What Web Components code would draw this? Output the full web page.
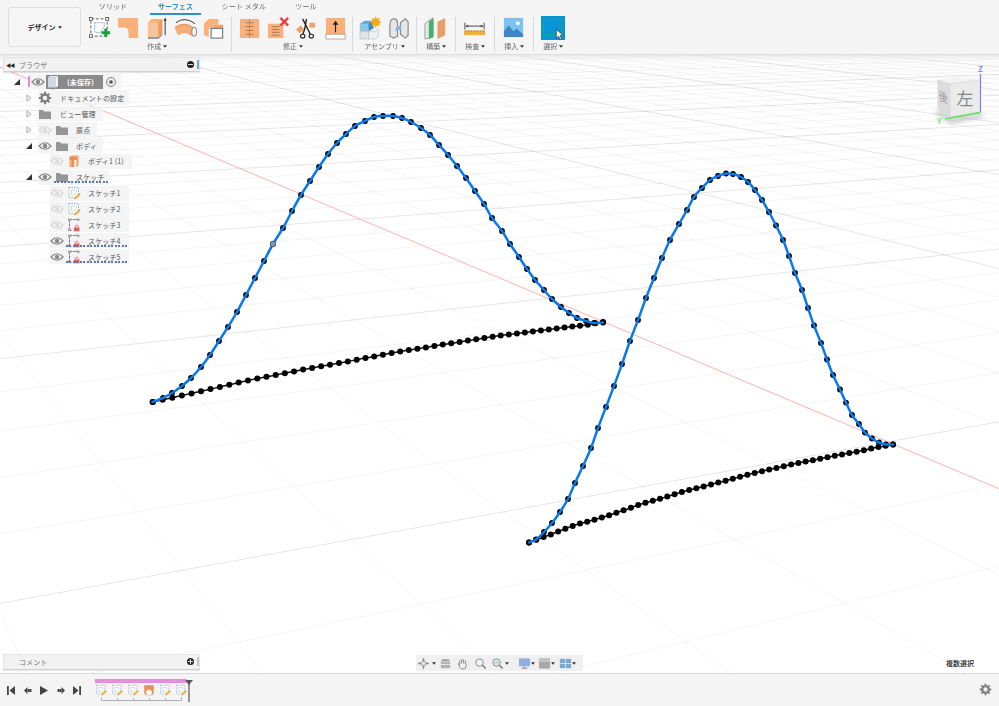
<!DOCTYPE html>
<html lang="ja"><head><meta charset="utf-8"><title>Fusion</title>
<style>
html,body{margin:0;padding:0;background:#fff;overflow:hidden}
body{font-family:"Noto Sans CJK JP","Noto Sans",sans-serif;font-size:7px;color:#555}
</style></head><body>
<fu-app>
  <fu-ribbon slot="ribbon">
    <fu-group label="作成" pad="86 2.5"><fu-icon name="sketch"></fu-icon><fu-icon name="lshape"></fu-icon><fu-icon name="extrude"></fu-icon><fu-icon name="sweep"></fu-icon><fu-icon name="loft"></fu-icon></fu-group>
    <fu-group label="修正" pad="4 2"><fu-icon name="press"></fu-icon><fu-icon name="del"></fu-icon><fu-icon name="scissors"></fu-icon><fu-icon name="up"></fu-icon></fu-group>
    <fu-group label="アセンブリ" pad="3 3"><fu-icon name="assembly"></fu-icon><fu-icon name="joint"></fu-icon></fu-group>
    <fu-group label="構築" pad="5 4.5"><fu-icon name="plane"></fu-icon></fu-group>
    <fu-group label="検査" pad="5 4.5"><fu-icon name="ruler"></fu-icon></fu-group>
    <fu-group label="挿入" pad="5 4.5"><fu-icon name="image"></fu-icon></fu-group>
    <fu-group label="選択" pad="5 4.5" nosep><fu-icon name="select"></fu-icon></fu-group>
  </fu-ribbon>
  <fu-viewport slot="view">
    <fu-browser>
      <fu-row lead="25" tri="open" kind="root">(未保存)</fu-row>
      <fu-row lead="35" tri="closed" icon="gear" end="5">ドキュメントの設定</fu-row>
      <fu-row lead="35" tri="closed" icon="folder" end="7">ビュー管理</fu-row>
      <fu-row lead="35" tri="closed" eye="off" icon="folder" end="7">原点</fu-row>
      <fu-row lead="35" tri="open" eye="on" icon="folder" end="6">ボディ</fu-row>
      <fu-row lead="47" eye="off" icon="body" end="8">ボディ1 (1)</fu-row>
      <fu-row lead="35" tri="open" eye="on" icon="folder" end="4" wave="16">スケッチ</fu-row>
      <fu-row lead="47" eye="off" icon="tsketch" end="8">スケッチ1</fu-row>
      <fu-row lead="47" eye="off" icon="tsketch" end="8">スケッチ2</fu-row>
      <fu-row lead="47" eye="off" icon="lock" end="8">スケッチ3</fu-row>
      <fu-row lead="47" eye="on" icon="lock" end="8" wave="16">スケッチ4</fu-row>
      <fu-row lead="47" eye="on" icon="lock" end="8" wave="16">スケッチ5</fu-row>
    </fu-browser>
    <fu-cube></fu-cube>
    <fu-comment></fu-comment>
    <fu-navbar></fu-navbar>
    <fu-status>複数選択</fu-status>
  </fu-viewport>
  <fu-timeline slot="timeline"></fu-timeline>
</fu-app>
<script>
const ICONS={
sketch:`<path d="M3 3h17v18H3z" fill="#fff" stroke="#555" stroke-width="1" stroke-dasharray="3 2"/><rect x="1.5" y="1.5" width="3" height="3" fill="#fff" stroke="#444" stroke-width=".8"/><rect x="18.5" y="1.5" width="3" height="3" fill="#fff" stroke="#444" stroke-width=".8"/><rect x="1.5" y="19.5" width="3" height="3" fill="#fff" stroke="#444" stroke-width=".8"/><path d="M7 7h10v4l-4 6H7z" fill="none" stroke="#7a93ad" stroke-width=".9" stroke-dasharray="2 1"/><path d="M16 15h3v-3h3v3h3v3h-3v3h-3v-3h-3z" transform="translate(-2 1)" fill="#14a03c"/>`,
lshape:`<path d="M1 2h21v21H12v-6q0-5-5-5H1z" fill="#f9b07a"/>`,
extrude:`<path d="M3 7l4-4h11v15l-4 4H3z" fill="#f9b07a"/><path d="M3 7h11v15H3z" fill="#f7c39a"/><path d="M14 7l4-4v15l-4 4z" fill="#ee9a5e"/><path d="M3 22h11l4-4v2l-4 4H3z" fill="#9a9a9a"/><path d="M21 20V3" stroke="#333" stroke-width="1"/><path d="M19.5 5L21 1.5 22.500 5z" fill="#333"/>`,
sweep:`<path d="M1 12q10-7 20 1l-3 8q-7-6-13-1-3-2-4-8z" fill="#f6ac76"/><path d="M1 12q10-7 20 1" fill="none" stroke="#e59358" stroke-width="1.200"/><ellipse cx="21" cy="16.500" rx="2.500" ry="4.500" fill="#fff" stroke="#888" stroke-width="1.100"/><path d="M2 7q9-7 20 1" fill="none" stroke="#333" stroke-width="1"/>`,
loft:`<path d="M2 8l5-5h10v6h-5v4H7v9l-5-2z" fill="#f9b07a"/><path d="M12 9h10v4l-4 3h-6z" fill="#f5a163"/><rect x="9.500" y="13" width="12" height="10" fill="#fff" stroke="#777" stroke-width="1.200"/>`,
press:`<rect x="2" y="3" width="20" height="20" fill="#f9b07a"/><path d="M12 3v20" stroke="#a86a3c" stroke-width=".5"/><path d="M8 7h8M8 11h8M8 15h8M8 19h8" stroke="#8d6b50" stroke-width=".8"/>`,
del:`<rect x="1" y="8" width="16" height="15" fill="#f9b07a"/><path d="M5 11h8M5 14h8M5 17h8M5 20h8" stroke="#8d6b50" stroke-width=".8"/><path d="M14 2l8 8M22 2l-8 8" stroke="#ec3c40" stroke-width="2.400"/>`,
scissors:`<rect x="15" y="7" width="6" height="5" fill="#f0a068"/><path d="M1 14l5-4 4 4-5 4z" fill="#f0a068"/><path d="M8 3l8 16M12 3L10 14l-2 5" stroke="#222" stroke-width="1.400" fill="none"/><ellipse cx="17" cy="21" rx="2.300" ry="2" fill="none" stroke="#222" stroke-width="1.200"/><ellipse cx="8" cy="21" rx="2.300" ry="2" fill="none" stroke="#222" stroke-width="1.200"/>`,
up:`<rect x="2" y="2" width="20" height="17" fill="#f9b07a"/><rect x="2" y="19" width="20" height="5" fill="#fff" stroke="#999" stroke-width=".8"/><path d="M12 17V8" stroke="#222" stroke-width="1.200"/><path d="M9 9l3-4 3 4z" fill="#222"/>`,
assembly:`<path d="M2 8l5-3h9v8H2z" fill="#5aa7dc"/><path d="M2 8h9v8H2z" fill="#8ec5ea"/><path d="M11 8l5-3v8l-5 3z" fill="#3f8cc4"/><path d="M2 16h9v8H2z" fill="#dfe3e6" stroke="#aaa" stroke-width=".5"/><path d="M11 16h7l3-3v8l-3 3h-7z" fill="#eceeef" stroke="#aaa" stroke-width=".5"/><path d="M17 0l1.300 3 3-1-1 3 3 1.300-3 1.400 1 3-3-1L17 13l-1.300-3.300-3 1 1-3L10.500 6.300l3.200-1.300-1-3 3 1z" transform="translate(1.500 0)" fill="#f6a81c"/>`,
joint:`<path d="M3 10q0-7 4-7 4 0 4 5v13l-4 2-4-2z" fill="#e4e6e8" stroke="#888" stroke-width="1.200"/><path d="M14 7l5-4 3 3v14l-3 3-5-4z" fill="#e4e6e8" stroke="#888" stroke-width="1.200"/><path d="M9 12l6-3v5l-6 2z" fill="#8fb6da"/>`,
plane:`<path d="M1 8l8-6v20l-8 2z" fill="#e8e8e8" stroke="#888" stroke-width=".8"/><path d="M5 6l5-4v20l-5 2z" fill="#47b06a"/><path d="M14 6l8-4v18l-8 4z" fill="#ea9d68"/>`,
ruler:`<path d="M2 7v7M22 7v7M3 10.500h18" stroke="#444" stroke-width="1" fill="none"/><path d="M3 10.500l2.500-1.500v3zM21 10.500l-2.500-1.500v3z" fill="#444"/><rect x="1" y="15" width="22" height="5" fill="#f3b03c"/><path d="M3 15v2M6 15v2M9 15v2M12 15v2M15 15v2M18 15v2M21 15v2" stroke="#8a6a1c" stroke-width=".6"/>`,
image:`<rect x="2" y="2" width="20" height="20" fill="#7cc3ef"/><circle cx="16.500" cy="7.500" r="2" fill="#fff"/><path d="M2 22v-6l5-6 5 6 3-3 7 6v3z" fill="#3e86c4"/>`,
select:`<rect x="0" y="0" width="25" height="25" fill="#0696d7"/><rect x="2.500" y="3.500" width="19" height="16" fill="none" stroke="#37b24d" stroke-width="1" stroke-dasharray="2 1.500"/><path d="M16 14v9l2.300-2 1.700 3.500 1.500-.7-1.700-3.300 3-.5z" fill="#fff" stroke="#222" stroke-width=".6"/>`
};
const SMALL={
eyeon:`<path d="M1 7q6-6.500 12 0q-6 6.500-12 0z" fill="none" stroke="#888" stroke-width="1.200"/><circle cx="7" cy="7" r="2.200" fill="#888"/>`,
eyeoff:`<path d="M1 7q6-6.500 12 0q-6 6.500-12 0z" fill="none" stroke="#d8d8d8" stroke-width="1.200"/><circle cx="7" cy="7" r="2" fill="#dcdcdc"/><path d="M2.500 2.500l9.500 9.500" stroke="#d8d8d8" stroke-width="1"/>`,
folder:`<path d="M1 3h4l1 1.500h7V12H1z" fill="#969696"/>`,
gear:`<circle cx="7" cy="7" r="3.500" fill="none" stroke="#808080" stroke-width="2.400"/><path d="M7 .8v2.500M7 10.700v2.500M.8 7h2.500M10.700 7h2.500M2.600 2.600l1.800 1.800M9.600 9.600l1.800 1.800M11.400 2.600L9.600 4.400M4.400 9.600l-1.800 1.800" stroke="#808080" stroke-width="2"/>`,
body:`<path d="M2.500 3l2-1.500h7v10l-2 1.500h-7z" fill="#f3a474"/><path d="M2.500 3h7v3h-1.500v7H5V6H2.500z" fill="#ee8d55"/><path d="M7 6h2.500v7H7z" fill="#fbe2cf"/>`,
tsketch:`<rect x="2" y="1.500" width="9.500" height="10" fill="#fff" stroke="#7aa3cf" stroke-width=".8" stroke-dasharray="1.500 1"/><path d="M4.500 4h5v2l-2 3h-3z" fill="none" stroke="#aebfd3" stroke-width=".6"/><path d="M7.500 11.500l3.500-3.500 2-.5-.5 2-3.500 3.500-1.800.4z" fill="#f4b13a"/><path d="M12 8l1.500-.5L13 9z" fill="#e8483f"/>`,
lock:`<path d="M2.500 1.500v9M2.500 1.500h9M2.500 12.500h2" stroke="#555" stroke-width=".8" fill="none" stroke-dasharray="3 1"/><rect x="1.700" y="1" width="1.600" height="1.600" fill="#fff" stroke="#555" stroke-width=".5"/><rect x="10.500" y="1" width="1.600" height="1.600" fill="#fff" stroke="#555" stroke-width=".5"/><rect x="1.700" y="10.800" width="1.600" height="1.600" fill="#fff" stroke="#555" stroke-width=".5"/><rect x="7" y="9.500" width="5.500" height="3.800" fill="#e2605e"/><path d="M8.300 9.500V8.300a1.500 1.500 0 012.900 0v1.200" fill="none" stroke="#e2605e" stroke-width=".9"/>`,
doc:`<path d="M2 2.500h8v10H2z" fill="#cfdbe4"/><path d="M10 2.500l2-1.500v10l-2 1.500z" fill="#f2f5f7"/><path d="M2 2.500l2-1.500h8l-2 1.500z" fill="#e8eef2"/>`
};
function def(name,css,html,init){customElements.define(name,class extends HTMLElement{
  constructor(){super();const r=this.attachShadow({mode:'open'});r.innerHTML=`<style>${css}</style>`+(typeof html==='function'?'':html);}
  connectedCallback(){if(typeof html==='function')this.shadowRoot.innerHTML+=html(this);if(init)init(this,this.shadowRoot);}
});}
const ff='"Noto Sans CJK JP","Noto Sans",sans-serif';
const caret=`<svg width="4" height="3" viewBox="0 0 5 3" style="margin-left:2px;flex:none"><path d="M0 0h5L2.500 3z" fill="#333"/></svg>`;

def('fu-app',`:host{display:flex;flex-direction:column;width:999px;height:706px;overflow:hidden;font-family:${ff};filter:blur(.3px)}`,
`<slot name="ribbon"></slot><slot name="view"></slot><slot name="timeline"></slot>`);

def('fu-ribbon',`:host{display:flex;height:54px;background:#f5f5f5;flex:none;position:relative;z-index:2;box-shadow:0 1px 1px rgba(0,0,0,.05)}
.design{flex:none;width:71px;height:38px;margin:7px 0 0 8px;border:1px solid #dedede;border-radius:3px;background:#f6f6f6;display:flex;align-items:center;justify-content:center;font-size:7px;font-weight:700;color:#222}
.r{display:flex;flex-direction:column;position:absolute;left:0;top:0;right:0;bottom:0}
.tabs{display:flex;height:15px;margin-left:88px;flex:none}
.tab{width:50px;height:13px;line-height:12px;text-align:center;color:#666;font-size:7px;letter-spacing:.1px}
.tab.a{width:51px;margin:0 12px;color:#2c8ed6;font-weight:700;border-bottom:2px solid #2c8ed6}
.tab.w{width:62px;margin-right:6px}
.gs{display:flex;flex:1}`,
`<div class="r"><div class="tabs"><div class="tab">ソリッド</div><div class="tab a">サーフェス</div><div class="tab w">シート メタル</div><div class="tab">ツール</div></div><div class="gs"><slot></slot></div></div><div class="design">デザイン${caret}</div>`);

def('fu-group',`:host{display:flex;flex-direction:column;align-items:stretch;height:39px;position:relative;box-sizing:content-box}
.i{display:flex;height:25px}
.l{display:flex;align-items:center;justify-content:center;height:12px;margin-top:0;font-size:7px;color:#666}
.s{position:absolute;right:0;top:2px;bottom:3px;width:1px;background:#d8d8d8}`,
h=>{const[a,b]=h.getAttribute('pad').split(' ');return `<div style="display:flex;flex-direction:column;padding:0 ${+b+(h.hasAttribute('nosep')?0:1)}px 0 ${a}px"><div class="i"><slot></slot></div><div class="l">${h.getAttribute('label')}${caret}</div></div>${h.hasAttribute('nosep')?'':'<div class="s"></div>'}`});

def('fu-icon',`:host{display:flex;width:28.5px;height:25px;align-items:center;justify-content:center;flex:none}svg{display:block}`,
h=>`<svg width="24" height="24" viewBox="0 0 25 25">${ICONS[h.getAttribute('name')]}</svg>`);

def('fu-viewport',`:host{display:block;flex:1;position:relative;background:#fff;overflow:hidden}
svg{position:absolute;left:0;top:0}`,
`<svg id="c" width="999" height="620" viewBox="0 54 999 620"></svg><slot></slot>`,
(h,r)=>{
 const V1=[3400,-15],V2=[-300,-58];let s='<defs><linearGradient id="g" x1="0" y1="0" x2="0" y2="1"><stop offset="0" stop-color="#e9e9e9"/><stop offset="1" stop-color="#e9e9e9" stop-opacity="0"/></linearGradient></defs>';
 for(let k=-1;k<=70;k++){const y0=1/(.00116+.00018*k)-54.5,m=(V1[1]-y0)/V1[0];
  const maj=((k%5)+5)%5===2;const fade=k>30?.6:1;
  s+=`<line x1="0" y1="${y0.toFixed(1)}" x2="999" y2="${(y0+999*m).toFixed(1)}" stroke="#000" stroke-opacity="${(maj?.10:.045)*fade}" stroke-width="1"/>`;}
 for(let n=-2;n<=40;n++){if(n===5)continue;const xa=175+198.3*n,sl=(560-V2[1])/(xa-V2[0]);
  const x=y=>V2[0]+(y-V2[1])/sl;const maj=((n%5)+5)%5===0&&n!==0;
  s+=`<line x1="${x(50).toFixed(1)}" y1="50" x2="${x(680).toFixed(1)}" y2="680" stroke="#000" stroke-opacity="${maj?.10:.045}" stroke-width="1"/>`;}
 s+=`<rect x="0" y="54" width="999" height="7" fill="url(#g)"/>`;
 s+=`<line x1="-10" y1="63" x2="1009" y2="492.900" stroke="#fbb4b4" stroke-width="1"/>`;
 const cr=p=>{let d=`M${p[0]}`;for(let i=0;i<p.length-1;i++){const a=p[i-1]||p[i],b=p[i],c=p[i+1],e=p[i+2]||c;
   d+=`C${(b[0]+(c[0]-a[0])/6).toFixed(1)} ${(b[1]+(c[1]-a[1])/6).toFixed(1)} ${(c[0]-(e[0]-b[0])/6).toFixed(1)} ${(c[1]-(e[1]-b[1])/6).toFixed(1)} ${c[0]} ${c[1]}`;}return d;};
 const lerp=(A,x)=>{for(let i=0;i<A.length-1;i++)if(x<=A[i+1][0]){const t=(x-A[i][0])/(A[i+1][0]-A[i][0]);return A[i][1]+t*(A[i+1][1]-A[i][1]);}return A[A.length-1][1];};
 const a1=[[153,402],[202,391],[250,380],[306,369],[334,364],[400,351.5],[500,335.5],[552,329],[586,325],[603,322]];
 const a2=[[529,542.5],[552,534],[575,525],[597,519],[619,512],[641,504],[663,498],[685,491],[707,485.6],[728,480],[750,474],[772,469],[793,464],[814,460],[836,455.5],[857,451.6],[879,447],[893,444.5]];
 const L1=[];for(let i=0;i<=52;i++){const x=153+9.7*i-.0201*i*i;L1.push([+x.toFixed(1),+lerp(a1,x).toFixed(1)]);}
 const L2=[];for(let i=0;i<=50;i++){const x=529+7.28*i;L2.push([+x.toFixed(1),+lerp(a2,x).toFixed(1)]);}
 const B1=[[152.500,402],[163,398],[172,393],[182,386],[191,378],[201,367],[210,355],[219,341],[228,327],[237,312],[246,295],[255,278],[264,261],[273,244],[283,228],[292,211],[301,195],[310,181],[319,167],[328,154],[337,143],[346,134],[355,126],[365,121],[374,117],[383,116],[393,116],[402,118],[411,122],[421,128],[430,135],[439,145],[448,155],[457,166],[466,178],[475,191],[484,204],[492,218],[502,231],[510,244],[519,257],[527,269],[535,280],[544,290],[552,299],[561,307],[569,313],[577,318],[586,321],[594,323],[603,322.500]];
 const B2=[[529,542.500],[536,539.500],[544,532],[552,523],[560,512],[568,499],[575,483],[583,466],[591,448],[598,428],[606,407],[614,386],[622,364],[630,341],[638,320],[646,298],[654,278],[662,258],[670,240],[679,224],[687,210],[694,197],[702,188],[710,180],[718,176],[726,173.500],[733,174],[741,177],[748,182],[755,190],[762,200],[769,212],[776,225.500],[783,240],[789,256],[795,273],[802,290],[808,308],[814,325.500],[821,343],[827,359.500],[833,375],[840,389.500],[846,402.600],[852,415],[859,424],[865,432.600],[872,438.500],[879,442.500],[886,444.500],[893,444.500]];
 const dots=(P,rr)=>P.map(p=>`<circle cx="${p[0]}" cy="${p[1]}" r="${rr}"/>`).join('');
 for(const[L,B]of[[L1,B1],[L2,B2]]){
  s+=`<path d="${cr(L)}" fill="none" stroke="#111" stroke-width="1.500"/><g fill="#000">${dots(L,3)}${dots(B,2.9)}</g><path d="${cr(B)}" fill="none" stroke="#0a78ea" stroke-width="2.500" stroke-linecap="round"/>`;}
 s+=`<circle cx="273" cy="244" r="2.800" fill="#7f96b4" stroke="#4f5f75" stroke-width=".8"/>`;
 r.getElementById('c').innerHTML=s;
});

def('fu-browser',`:host{display:block;position:absolute;left:3px;top:3px;width:197px}
.h{height:15px;box-sizing:border-box;display:flex;align-items:center;background:#f2f2f2;border:1px solid #e4e4e4;border-bottom-color:#d0d0d0;box-shadow:0 1px 1px rgba(0,0,0,.08);font-size:7px;color:#777;position:relative}
.h i{font-style:normal;color:#222;font-size:5px;margin:0 6px 0 2px;width:7px;letter-spacing:-1px}
.h b{position:absolute;right:5px;top:3px;width:7px;height:7px;border-radius:50%;background:#222}
.h b::after{content:"";position:absolute;left:1px;right:1px;top:3px;height:1px;background:#ddd}
.h u{position:absolute;right:0;top:2px;width:2px;height:9px;background:#6aa9d6}
.t{margin-top:2px}`,
`<div class="h"><i>◀◀</i><span style="letter-spacing:.1px">ブラウザ</span><b></b><u></u></div><div class="t"><slot></slot></div>`);

def('fu-row',`:host{display:flex;height:15.9px;align-items:center;font-size:7px;color:#555;letter-spacing:.15px}
.lead{flex:none;display:flex;justify-content:flex-end;align-items:center;box-sizing:border-box;padding-right:6px}
.pill{display:flex;align-items:center;height:15px;background:rgba(243,243,243,.92);position:relative;white-space:nowrap}
.c{flex:none;width:14px;height:14px;display:block}
.d{flex:none;width:14px;height:14px;margin:0 3px}
.wave{position:absolute;bottom:1.500px;right:1px;height:2px;background:repeating-linear-gradient(90deg,#5b78b0 0 2px,transparent 2px 3.500px)}
.root{display:flex;align-items:center;background:#8a8a8a;height:14px;width:57px;margin-left:1px;color:#fff;font-weight:700}
.bar{width:2px;height:11px;background:#e48ae4;flex:none;margin-right:1px}`,
h=>{const lead=+h.getAttribute('lead'),tri=h.getAttribute('tri'),eye=h.getAttribute('eye'),ic=h.getAttribute('icon'),end=h.getAttribute('end')||6,wave=h.getAttribute('wave');
 const t=tri==='open'?`<svg width="6" height="6" viewBox="0 0 6 6"><path d="M6 0v6H0z" fill="#333"/></svg>`:tri==='closed'?`<svg width="6" height="8" viewBox="0 0 6 8"><path d="M1 1l4 3-4 3z" fill="none" stroke="#aaa"/></svg>`:'';
 const sv=(n,c)=>`<svg class="${c}" viewBox="0 0 14 14">${SMALL[n]}</svg>`;
 if(h.getAttribute('kind')==='root')return `<div class="lead" style="width:${lead}px;padding-right:8px">${t}</div><div class="pill" style="background:none"><div class="bar"></div></div><div class="pill" style="padding-right:2px">${sv('eyeon','c')}<div class="root"><svg class="c" viewBox="0 0 14 14">${SMALL.doc}</svg><span style="margin-left:7px"><slot></slot></span></div><svg class="c" style="margin:0 1px" viewBox="0 0 14 14"><circle cx="7" cy="7" r="4.500" fill="#eee" stroke="#888"/><circle cx="7" cy="7" r="1.800" fill="#555"/></svg></div>`;
 return `<div class="lead" style="width:${lead}px">${t}</div><div class="pill" style="padding-right:${end}px">${eye?sv(eye==='on'?'eyeon':'eyeoff','c')+sv(ic,'d')+'<span style="margin-left:4px"><slot></slot></span>':sv(ic,'c')+'<span style="margin-left:8px"><slot></slot></span>'}${wave?`<div class="wave" style="left:${wave}px"></div>`:''}</div>`});

def('fu-cube',`:host{display:block;position:absolute;left:925px;top:10px;width:74px;height:66px}
svg{display:block}text{font-family:${ff}}`,
`<svg width="74" height="66" viewBox="925 64 74 66">
<defs><filter id="b"><feGaussianBlur stdDeviation="2"/></filter></defs>
<path d="M938 109l12 9 31-5 3 4-33 7-15-10z" fill="#aaa" opacity=".6" filter="url(#b)"/>
<path d="M938 80l12 4v33l-12-8z" fill="#dcdcdc"/><path d="M950 84l30-4v32l-30 5z" fill="#ebebeb"/><path d="M938 80l12 4 30-4-13-3-5 1-3-1z" fill="#f3f3f3"/>
<path d="M938 80l12 4 30-4M950 84v33M938 80v29l12 8 30-5" fill="none" stroke="#d2d2d2" stroke-width=".7"/>
<text x="965" y="105" text-anchor="middle" font-size="17" fill="#888">左</text>
<text x="0" y="0" font-size="11" fill="#a0a0a0" transform="translate(938.500 100) scale(.85 1.150) skewY(16)">後</text>
<path d="M980.500 112V74" stroke="#7f7fee" stroke-width="1.200"/><path d="M945 119l35.500-6.500" stroke="#61dd61" stroke-width="1.400"/>
<text x="978" y="72" font-size="8" font-weight="700" fill="#8a8af0">Z</text><text x="937" y="124" font-size="8" font-weight="700" fill="#7be27b">Y</text>
</svg>`);

def('fu-comment',`:host{display:flex;align-items:center;position:absolute;left:3px;bottom:3px;width:197px;height:16px;box-sizing:border-box;background:#f2f2f2;border:1px solid #e6e6e6;border-bottom-color:#d0d0d0;box-shadow:0 1px 1px rgba(0,0,0,.08);font-size:7px;color:#777;padding-left:15px}
b{position:absolute;right:5px;top:3px;width:7px;height:7px;border-radius:50%;background:#222}
b::before{content:"";position:absolute;left:1px;right:1px;top:3px;height:1px;background:#ddd}
b::after{content:"";position:absolute;top:1px;bottom:1px;left:3px;width:1px;background:#ddd}
u{position:absolute;right:0;top:2px;width:2px;height:9px;background:#c5c5c5}`,
`<span style="letter-spacing:.1px">コメント</span><b></b><u></u>`);

const nv={
orbit:`<path d="M7 1.500v11M1.500 7h11" stroke="#8a8a8a" stroke-width="1.100"/><circle cx="7" cy="7" r="2.500" fill="#eee" stroke="#888"/><path d="M5.500 3L7 1l1.500 2zM5.500 11L7 13l1.500-2zM3 5.500L1 7l2 1.500zM11 5.500L13 7l-2 1.500z" fill="#888"/>`,
look:`<rect x="2" y="5" width="10" height="7" fill="#b0b0b0"/><rect x="3" y="2.500" width="8" height="2" fill="#999"/><path d="M2 8h10" stroke="#eee"/>`,
hand:`<path d="M4 8V3.500M6 7V2.500M8 7V2.500M10 7.500V3.500M4 8L2.500 7l1.500 4q1 2 3.500 2 3.500 0 3.500-4V7" fill="none" stroke="#888" stroke-width="1"/>`,
zoom:`<circle cx="6" cy="6" r="4" fill="#eef3f6" stroke="#888" stroke-width="1"/><path d="M9 9l3.500 3.500" stroke="#777" stroke-width="1.500"/>`,
zfit:`<circle cx="6" cy="6" r="4" fill="#dfe7ec" stroke="#888" stroke-width="1"/><path d="M9 9l3.500 3.500" stroke="#777" stroke-width="1.500"/><path d="M4 6h4" stroke="#aaa"/>`,
disp:`<rect x="1" y="1.500" width="12" height="8.500" fill="#8fb0dc"/><path d="M4 12h6M7 10v2" stroke="#999" stroke-width="1.200"/>`,
grid:`<rect x="1" y="1.500" width="12" height="11" fill="#a8a8a8"/><rect x="1" y="1.500" width="12" height="4" fill="#c4c4c4"/>`,
view:`<rect x="1" y="2" width="12" height="10" fill="#7aa6d6"/><path d="M7 2v10M1 7h12" stroke="#e8f0f8" stroke-width=".8"/>`};
def('fu-navbar',`:host{display:flex;align-items:center;position:absolute;left:416px;bottom:2px;width:167px;height:16px;background:#f0f0f0;box-sizing:border-box}
svg{flex:none;display:block}`,
()=>{const it=[['orbit',1],['c',2],['look',2.5],['hand',4],['zoom',5],['zfit',4],['c',1.5],['disp',8.5],['c',0],['grid',3],['c',0],['view',4],['c',0]];
 let x='';
 for(const[n,g]of it){x+=n==='c'?`<svg style="margin-left:${g}px" width="4" height="3" viewBox="0 0 5 3"><path d="M0 0h5L2.500 3z" fill="#333"/></svg>`:`<svg style="margin-left:${g}px" width="13" height="13" viewBox="0 0 14 14">${nv[n]}</svg>`;}
 return x;});

def('fu-status',`:host{display:block;position:absolute;left:946px;bottom:4px;font-size:7px;color:#222;font-weight:500;line-height:12px;white-space:nowrap}`,`<slot></slot>`);

def('fu-timeline',`:host{display:flex;flex:none;height:33px;box-sizing:border-box;border-top:1px solid #d9d9d9;background:#f4f4f4;position:relative;align-items:center}
.ctl{display:flex;align-items:center;margin-left:7px;width:74px;flex:none;justify-content:space-between}
.ctl svg{display:block}
.st{position:relative;margin-left:13px;width:96px;height:32px;flex:none}
.pink{position:absolute;left:1px;top:5px;width:92px;height:4px;background:#e58ee0}
.ic{position:absolute;left:-1px;top:10px;display:flex}
.ic svg{width:12px;height:12px;margin:0 2px;display:block}
.br{position:absolute;left:-1px;top:23px}
.ph{position:absolute;left:90.500px;top:5px}
.gear{position:absolute;right:7px;top:9px}`,
()=>{const c=d=>`<svg width="8" height="9" viewBox="0 0 8 9"><path d="${d}" fill="#444"/></svg>`;
 const ts=`<svg viewBox="0 0 14 14">${SMALL.tsketch}</svg>`;
 const bd=`<svg viewBox="0 0 14 14"><path d="M1.500 1.500h11v9a3 3 0 01-2 2.500H3.500a3 3 0 01-2-2.500z" fill="#ee8d55"/><circle cx="7" cy="10" r="3.400" fill="#fff" stroke="#ccc" stroke-width=".5"/></svg>`;
 return `<div class="ctl">${c('M0 0h1.800v9H0zM8 0v9L2.500 4.500z')}${c('M0 4.500L3.500 1v7zM3.800 3h1.500v3H3.800zM5.500 3h2v3h-2z')}${c('M0 0v9l8-4.500z')}${c('M8 4.500L4.500 1v7zM4.200 3H2.700v3h1.500zM2.500 3h-2v3h2z')}${c('M8 0H6.200v9H8zM0 0v9l5.500-4.500z')}</div>
 <div class="st"><div class="pink"></div><div class="ic">${ts}${ts}${ts}${bd}${ts}${ts}</div>
 <svg class="br" width="96" height="6" viewBox="0 0 96 6"><path d="M8.500 0v3.500h80V0M24.500 1v3M40.500 1v3M56.500 1v3M72.500 1v3" fill="none" stroke="#aaa" stroke-width=".9"/></svg>
 <svg class="ph" width="8" height="24" viewBox="0 0 8 24"><path d="M0 1h8L4 6z" fill="#555"/><path d="M4 3v20" stroke="#555" stroke-width="1.200"/></svg></div>
 <svg class="gear" width="13" height="13" viewBox="0 0 14 14">${SMALL.gear}</svg>`});
</script>
</body></html>
